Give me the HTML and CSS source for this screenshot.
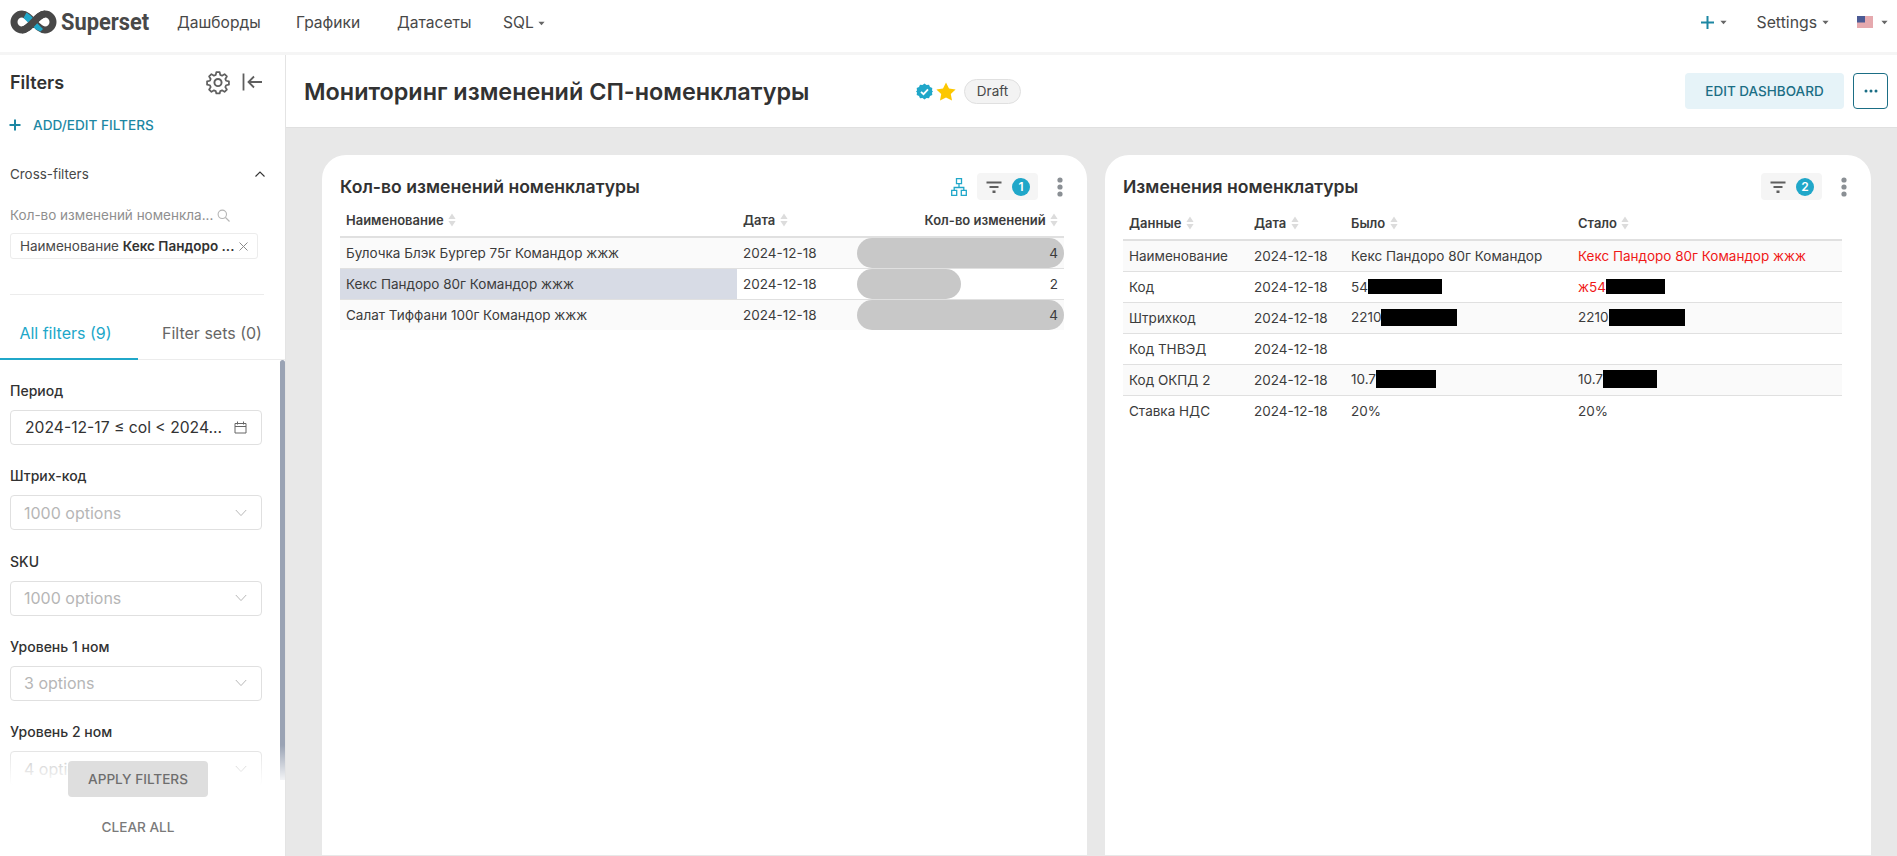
FILE: index.html
```html
<!DOCTYPE html>
<html lang="ru">
<head>
<meta charset="utf-8">
<title>Superset</title>
<link rel="stylesheet" href="styles.css">
</head>
<body>
<svg class="defs" width="0" height="0" aria-hidden="true">
  <defs>
    <symbol id="sort" viewBox="0 0 8 14"><path d="M4 0.5 7.6 6H0.4Z M4 13.5 0.4 8H7.6Z" fill="#dcdcdc"/></symbol>
    <symbol id="funnel" viewBox="0 0 16 14"><path d="M0.5 1.5H15.5V3.6H0.5Z M3.5 6H12.5V8H3.5Z M6.5 10.5H9.5V13H6.5Z" fill="#5f5f5f"/></symbol>
    <symbol id="kebab" viewBox="0 0 6 20"><circle cx="3" cy="3" r="2.6" fill="#8a8f94"/><circle cx="3" cy="10" r="2.6" fill="#8a8f94"/><circle cx="3" cy="17" r="2.6" fill="#8a8f94"/></symbol>
    <symbol id="chev" viewBox="0 0 12 8"><path d="M0.8 1 6 6.6 11.2 1" fill="none" stroke="#b8b8b8" stroke-width="1"/></symbol>
    <symbol id="caret" viewBox="0 0 8 5"><path d="M0.5 0.5H7.5L4 4.5Z" fill="#666"/></symbol>
  </defs>
</svg>

<nav class="nav">
  <div class="brand">
    <svg class="logo" viewBox="0 0 47 24" width="47" height="24" aria-hidden="true">
      <path d="M12 4c-4.400 0-8 3.600-8 8s3.600 8 8 8c4 0 7-3.200 11.500-8 4.500-4.800 7.500-8 11.500-8 4.400 0 8 3.600 8 8s-3.600 8-8 8c-4 0-7-3.200-11.500-8-4.500-4.800-7.500-8-11.500-8Z" fill="none" stroke="#484848" stroke-width="7"/>
      <path d="M16.500 2.500 20 5 26 11 21 15.500 13.500 8Z M26 12 33 19 30.500 21.500 26 19.500 21 14.500Z" fill="#20a7c9"/>
      <path d="M12 20c4 0 7-3.200 11.500-8 4.500-4.800 7.500-8 11.500-8" fill="none" stroke="#484848" stroke-width="7"/>
    </svg>
    <span class="brand-name">Superset</span>
  </div>
  <a class="nav-link nav-dash">Дашборды</a>
  <a class="nav-link nav-chart">Графики</a>
  <a class="nav-link nav-data">Датасеты</a>
  <a class="nav-link nav-sql">SQL <svg class="caret" width="7" height="5"><use href="#caret"/></svg></a>
  <div class="nav-right">
    <span class="nav-item nav-plus">
      <svg width="15" height="15" viewBox="0 0 15 15" aria-hidden="true"><path d="M7.500 1V14M1 7.500H14" stroke="#1d87a3" stroke-width="2"/></svg>
      <svg class="caret" width="7" height="5"><use href="#caret"/></svg>
    </span>
    <span class="nav-item nav-settings">Settings <svg class="caret" width="7" height="5"><use href="#caret"/></svg></span>
    <span class="nav-item nav-flag">
      <svg width="16" height="12" viewBox="0 0 16 12" aria-hidden="true">
        <rect width="16" height="12" fill="#f2f2f2"/>
        <path d="M0 1H16M0 3H16M0 5H16M0 7H16M0 9H16M0 11H16" stroke="#d9606b" stroke-width="1"/>
        <rect width="8" height="6.500" fill="#4b5a94"/>
      </svg>
      <svg class="caret" width="7" height="5"><use href="#caret"/></svg>
    </span>
  </div>
</nav>

<div class="page">
  <aside class="side">
    <div class="side-head">
      <h2 class="side-title">Filters</h2>
      <div class="side-tools">
        <svg class="gear" width="26" height="26" viewBox="0 0 24 24" aria-hidden="true">
          <path d="M10.300 2.500h3.400l.6 2.900 1.900.8 2.500-1.600 2.400 2.400-1.600 2.500.8 1.900 2.900.6v3.400l-2.900.6-.8 1.900 1.600 2.500-2.400 2.400-2.500-1.600-1.900.8-.6 2.400h-3.400l-.6-2.400-1.900-.8-2.500 1.600-2.400-2.400 1.600-2.500-.8-1.900-2.900-.6v-3.400l2.900-.6.8-1.900-1.600-2.500 2.400-2.400 2.500 1.600 1.900-.8Z" transform="translate(1.200 .6) scale(.9)" fill="none" stroke="#5f5f5f" stroke-width="1.800" stroke-linejoin="round"/>
          <circle cx="12" cy="12.500" r="3.300" fill="none" stroke="#5f5f5f" stroke-width="1.800"/>
        </svg>
        <svg class="collapse" width="21" height="18" viewBox="0 0 21 18" aria-hidden="true">
          <path d="M1.500 0.500V17.500" stroke="#5f5f5f" stroke-width="1.800"/>
          <path d="M20 9H6.500M12 3.500 6.500 9 12 14.500" fill="none" stroke="#5f5f5f" stroke-width="1.800"/>
        </svg>
      </div>
    </div>
    <div class="add-filters">
      <svg width="12" height="12" viewBox="0 0 12 12" aria-hidden="true"><path d="M6 .5V11.500M.5 6H11.500" stroke="#1d87a3" stroke-width="2"/></svg>
      <span>ADD/EDIT FILTERS</span>
    </div>
    <div class="cross-head">
      <span>Cross-filters</span>
      <svg width="10" height="6" viewBox="0 0 10 6" aria-hidden="true"><path d="M.5 5.500 5 1l4.500 4.500" fill="none" stroke="#333" stroke-width="1.100"/></svg>
    </div>
    <div class="cross-label">
      <span>Кол-во изменений номенкла...</span>
      <svg width="13" height="13" viewBox="0 0 13 13" aria-hidden="true"><circle cx="5.300" cy="5.300" r="4.200" fill="none" stroke="#b5b5b5" stroke-width="1.100"/><path d="M8.500 8.500 12.500 12.500" stroke="#b5b5b5" stroke-width="1.100"/></svg>
    </div>
    <div class="cross-tag">
      <span>Наименование <b>Кекс Пандоро ...</b></span>
      <svg width="9" height="9" viewBox="0 0 9 9" aria-hidden="true"><path d="M.5 .5 8.500 8.500M8.500 .5 .5 8.500" stroke="#8a8a8a" stroke-width="1"/></svg>
    </div>
    <div class="side-rule"></div>
    <div class="tabs">
      <span class="tab tab-on">All filters (9)</span>
      <span class="tab">Filter sets (0)</span>
    </div>
    <div class="filters">
      <div class="scrollbar"></div>
      <div class="field">
        <label class="field-label">Период</label>
        <div class="input input-date">
          <span>2024-12-17 ≤ col &lt; 2024...</span>
          <svg width="13" height="13" viewBox="0 0 13 13" aria-hidden="true"><path d="M1 2.500H12V12H1ZM1 5.500H12M3.500 .5V3.500M9.500 .5V3.500" fill="none" stroke="#666" stroke-width="1"/></svg>
        </div>
      </div>
      <div class="field">
        <label class="field-label">Штрих-код</label>
        <div class="input"><span>1000 options</span><svg width="12" height="8"><use href="#chev"/></svg></div>
      </div>
      <div class="field">
        <label class="field-label">SKU</label>
        <div class="input"><span>1000 options</span><svg width="12" height="8"><use href="#chev"/></svg></div>
      </div>
      <div class="field">
        <label class="field-label">Уровень 1 ном</label>
        <div class="input"><span>3 options</span><svg width="12" height="8"><use href="#chev"/></svg></div>
      </div>
      <div class="field">
        <label class="field-label">Уровень 2 ном</label>
        <div class="input"><span>4 options</span><svg width="12" height="8"><use href="#chev"/></svg></div>
      </div>
      <div class="fade"></div>
    </div>
    <button class="apply">APPLY FILTERS</button>
    <button class="clear">CLEAR ALL</button>
  </aside>

  <main class="main">
    <header class="dash-head">
      <h1 class="dash-title">Мониторинг изменений СП-номенклатуры</h1>
      <svg class="verified" width="17" height="17" viewBox="0 0 17 17" aria-hidden="true">
        <path d="M8.500 .5l2 1.500 2.500-.3 1 2.300 2.300 1-.3 2.500 1 1-1 1 .3 2.500-2.300 1-1 2.300-2.500-.3-2 1.500-2-1.500-2.500.3-1-2.300-2.300-1 .3-2.500-1-1 1-1-.3-2.500 2.300-1 1-2.300 2.500.3Z" fill="#20a7c9"/>
        <path d="M5 8.800 7.500 11.200 12 6.300" fill="none" stroke="#fff" stroke-width="1.800"/>
      </svg>
      <svg class="star" width="20" height="19" viewBox="0 0 20 19" aria-hidden="true"><path d="M10 .5 13 6.600l6.600.9-4.800 4.600 1.200 6.500L10 15.500l-6 3.100 1.200-6.500L.4 7.500 7 6.600Z" fill="#fcc700"/></svg>
      <span class="draft">Draft</span>
      <div class="dash-actions">
        <button class="edit">EDIT DASHBOARD</button>
        <button class="more">
          <svg width="14" height="4" viewBox="0 0 14 4" aria-hidden="true"><circle cx="2" cy="2" r="1.500" fill="#1b6e85"/><circle cx="7" cy="2" r="1.500" fill="#1b6e85"/><circle cx="12" cy="2" r="1.500" fill="#1b6e85"/></svg>
        </button>
      </div>
    </header>

    <div class="grid">
      <section class="card card-left">
        <div class="card-head">
          <h3 class="card-title">Кол-во изменений номенклатуры</h3>
          <svg class="tree" width="16" height="18" viewBox="0 0 16 18" aria-hidden="true">
            <path d="M5.500 .7h5v5h-5ZM.7 12.300h5v5h-5ZM10.300 12.300h5v5h-5ZM8 5.700V9.500M3.200 12.300V9.500H12.800V12.300" fill="none" stroke="#20a7c9" stroke-width="1.300"/>
          </svg>
          <div class="badge-box"><svg width="16" height="14"><use href="#funnel"/></svg><span class="badge">1</span></div>
          <svg class="kebab" width="6" height="20"><use href="#kebab"/></svg>
        </div>
        <table class="tbl tbl-left">
          <thead>
            <tr>
              <th class="c-name">Наименование <svg class="sort" width="8" height="14"><use href="#sort"/></svg></th>
              <th class="c-date">Дата <svg class="sort" width="8" height="14"><use href="#sort"/></svg></th>
              <th class="c-num">Кол-во изменений <svg class="sort" width="8" height="14"><use href="#sort"/></svg></th>
            </tr>
          </thead>
          <tbody>
            <tr class="odd">
              <td>Булочка Блэк Бургер 75г Командор жжж</td><td>2024-12-18</td>
              <td class="num"><div class="bar bar-full"></div><span class="num-val">4</span></td>
            </tr>
            <tr>
              <td class="picked">Кекс Пандоро 80г Командор жжж</td><td>2024-12-18</td>
              <td class="num"><div class="bar bar-half"></div><span class="num-val">2</span></td>
            </tr>
            <tr class="odd">
              <td>Салат Тиффани 100г Командор жжж</td><td>2024-12-18</td>
              <td class="num"><div class="bar bar-full"></div><span class="num-val">4</span></td>
            </tr>
          </tbody>
        </table>
      </section>

      <section class="card card-right">
        <div class="card-head">
          <h3 class="card-title">Изменения номенклатуры</h3>
          <div class="badge-box badge-box-r"><svg width="16" height="14"><use href="#funnel"/></svg><span class="badge">2</span></div>
          <svg class="kebab" width="6" height="20"><use href="#kebab"/></svg>
        </div>
        <table class="tbl tbl-right">
          <thead>
            <tr>
              <th class="r1">Данные <svg class="sort" width="8" height="14"><use href="#sort"/></svg></th>
              <th class="r2">Дата <svg class="sort" width="8" height="14"><use href="#sort"/></svg></th>
              <th class="r3">Было <svg class="sort" width="8" height="14"><use href="#sort"/></svg></th>
              <th>Стало <svg class="sort" width="8" height="14"><use href="#sort"/></svg></th>
            </tr>
          </thead>
          <tbody>
            <tr class="odd"><td>Наименование</td><td>2024-12-18</td><td>Кекс Пандоро 80г Командор</td><td class="red">Кекс Пандоро 80г Командор жжж</td></tr>
            <tr><td>Код</td><td>2024-12-18</td><td>54<span class="mask m1"></span></td><td class="red">ж54<span class="mask m2"></span></td></tr>
            <tr class="odd"><td>Штрихкод</td><td>2024-12-18</td><td>2210<span class="mask m3"></span></td><td>2210<span class="mask m3 m3b"></span></td></tr>
            <tr><td>Код ТНВЭД</td><td>2024-12-18</td><td></td><td></td></tr>
            <tr class="odd"><td>Код ОКПД 2</td><td>2024-12-18</td><td>10.7<span class="mask m4"></span></td><td>10.7<span class="mask m5"></span></td></tr>
            <tr><td>Ставка НДС</td><td>2024-12-18</td><td>20%</td><td>20%</td></tr>
          </tbody>
        </table>
      </section>
    </div>
  </main>
</div>
</body>
</html>
```

FILE: styles.css
```css
* { box-sizing: border-box; }
html, body { margin: 0; height: 100%; overflow: hidden; }
body { font-family: Inter, "Noto Sans", sans-serif; color: #323232; background: #fff; font-size: 14px; }
.defs { position: absolute; }
h1, h2, h3 { margin: 0; }

/* top nav */
.nav { height: 55px; display: flex; align-items: center; padding: 0 0 8px 10px; border-bottom: 3px solid #f5f5f5; background: #fff; }
.brand { display: flex; align-items: center; gap: 4px; width: 167px; }
.brand-name { font-family: Roboto, Inter, sans-serif; font-size: 23.5px; font-weight: 700; color: #484848; transform: scaleX(.93); transform-origin: left center; }
.nav-link { font-size: 15.6px; color: #484848; }
.nav-dash { width: 119px; }
.nav-chart { width: 101px; }
.nav-data { width: 106px; }
.nav-right { margin-left: auto; display: flex; align-items: center; }
.nav-item { display: inline-flex; align-items: center; gap: 5px; font-size: 15.8px; color: #484848; }
.nav-plus { margin-right: 30px; }
.nav-settings { margin-right: 28px; }
.nav-flag { margin-right: 9px; gap: 8px; }
.caret { vertical-align: 2px; }

/* page */
.page { display: flex; height: 801px; }
.side { position: relative; flex: 0 0 286px; border-right: 1px solid #e4e4e4; background: #fff; overflow: hidden; }
.side-head { display: flex; align-items: center; justify-content: space-between; height: 54px; padding: 0 22px 0 10px; }
.side-title { font-size: 18px; font-weight: 600; color: #323232; }
.side-tools { display: flex; align-items: center; gap: 11px; }
.add-filters { display: flex; align-items: center; gap: 12px; padding-left: 9px; height: 32px; color: #1d87a3; font-size: 13.6px; font-weight: 500; }
.cross-head { display: flex; align-items: center; justify-content: space-between; padding: 0 20px 0 10px; margin-top: 17px; height: 32px; font-size: 13.4px; color: #484848; }
.cross-label { display: flex; align-items: center; gap: 4px; padding-left: 10px; margin-top: 13px; height: 24px; font-size: 13.5px; color: #8f8f8f; }
.cross-tag { display: flex; align-items: center; justify-content: space-between; margin: 6px 0 0 10px; width: 248px; height: 26px; padding: 0 9px; border: 1px solid #ececec; border-radius: 3px; font-size: 13.5px; color: #484848; white-space: nowrap; }
.cross-tag b { font-weight: 600; color: #323232; }
.side-rule { margin: 35px 21px 0 10px; border-top: 1px solid #ececec; }
.tabs { display: flex; height: 65px; border-bottom: 1px solid #ececec; }
.tab { flex: 0 0 138px; display: flex; align-items: center; justify-content: center; padding-top: 12px; font-size: 16px; color: #666; }
.tab-on { color: #20a7c9; border-bottom: 2px solid #20a7c9; margin-bottom: -1px; padding-right: 7px; }
.tab:not(.tab-on) { padding-left: 10px; }
.filters { position: relative; height: 440px; padding-top: 19px; overflow: hidden; }
.scrollbar { position: absolute; top: 0; right: 0; width: 5px; height: 420px; border-radius: 3px 3px 0 0; background: #9aa3b4; }
.field { height: 85.3px; padding: 0 23px 0 10px; }
.field-label { display: block; font-size: 14px; font-weight: 500; line-height: 24px; color: #323232; }
.input { display: flex; align-items: center; justify-content: space-between; height: 35px; margin-top: 7px; padding: 0 14px 0 13px; border: 1px solid #e0e0e0; border-radius: 4px; font-size: 16px; color: #b6b6b6; white-space: nowrap; }
.input-date { padding: 0 14px; font-size: 15.7px; color: #323232; }
.fade { position: absolute; left: 0; right: 0; top: 385px; height: 40px; background: linear-gradient(to bottom, rgba(255,255,255,0), #fff); }
.fade::after { content: ""; position: absolute; left: 0; right: 0; top: 40px; height: 60px; background: #fff; }
.apply, .clear { position: absolute; left: 68px; width: 140px; border: 0; font-family: inherit; font-size: 13.6px; font-weight: 500; text-align: center; }
.apply { top: 706px; height: 36px; border-radius: 4px; background: #dedede; color: #6e6e6e; }
.clear { top: 762px; height: 20px; padding: 0; background: none; color: #7a7a7a; }

/* main */
.main { flex: 1; min-width: 0; display: flex; flex-direction: column; background: #e8e8e8; }
.dash-head { display: flex; align-items: center; height: 73px; flex: none; padding: 0 9px 0 18px; background: #fff; border-bottom: 1px solid #e0e0e0; }
.dash-title { width: 612px; font-size: 23.4px; font-weight: 600; color: #323232; white-space: nowrap; }
.verified { margin-right: 3px; }
.star { margin-right: 8px; }
.draft { display: inline-flex; align-items: center; justify-content: center; width: 57px; height: 25px; border: 1px solid #e0e0e0; border-radius: 13px; background: #f3f3f3; font-size: 13.5px; color: #484848; }
.dash-actions { margin-left: auto; display: flex; gap: 9px; }
.edit { width: 159px; height: 36px; border: 0; padding: 0; border-radius: 4px; background: #e6f3f8; color: #1b6e85; font-family: inherit; font-size: 13.5px; font-weight: 500; }
.more { display: flex; align-items: center; justify-content: center; width: 35px; height: 36px; padding: 0; border: 1px solid #1b6e85; border-radius: 4px; background: #fff; }

.grid { flex: 1; display: grid; grid-template-columns: 765px 766px; column-gap: 18px; padding: 27px 26px 0 36px; overflow: hidden; }
.card { border-radius: 24px 24px 0 0; background: #fff; padding: 18px 0 0 18px; height: 700px; }
.card-head { display: flex; align-items: center; height: 27px; padding-right: 24px; }
.card-title { margin-right: auto; font-size: 17.6px; font-weight: 600; color: #323232; }
.tree { margin-right: 10px; }
.badge-box { display: flex; align-items: center; gap: 10px; width: 61px; height: 27px; padding-left: 9px; border-radius: 4px; background: #f5f5f5; }
.badge { display: inline-flex; align-items: center; justify-content: center; width: 18px; height: 18px; border-radius: 50%; background: #20a7c9; color: #fff; font-size: 12px; font-weight: 600; }
.kebab { margin-left: 19px; }

.tbl { border-collapse: collapse; table-layout: fixed; font-size: 13.5px; color: #3c3c3c; }
.tbl th { text-align: left; font-weight: 600; font-size: 13px; color: #3c3c3c; white-space: nowrap; padding: 0 6px; border-bottom: 2px solid #e0e0e0; }
.tbl td { height: 31px; padding: 0 6px; border-bottom: 1px solid #e0e0e0; white-space: nowrap; }
.tbl tbody tr:last-child td { border-bottom: 0; }
.tbl .odd td { background: #fafafa; }
.sort { vertical-align: -2px; margin-left: 1px; }
.tbl-left { width: 724px; margin-top: 4px; }
.tbl-left th { height: 33px; }
.c-name { width: 397px; }
.c-date { width: 120px; }
.c-num { text-align: right !important; }
.tbl-right { width: 719px; margin-top: 6px; margin-left: 0; }
.tbl-right th { height: 34px; }
.r1 { width: 125px; }
.r2 { width: 97px; }
.r3 { width: 227px; }
.tbl td.picked { background: #d7dbe5; }
.num { position: relative; padding: 0 !important; text-align: right; }
.bar { position: absolute; left: 0; top: 0; bottom: 0; border-radius: 15px; background: #c8c8c8; }
.bar-full { width: 100%; }
.bar-half { width: 50%; }
.num-val { position: relative; padding-right: 6px; }
.red { color: #f01818; }
.mask { display: inline-block; vertical-align: middle; background: #000; margin-top: -2px; }
.m1 { width: 74px; height: 15px; }
.m2 { width: 59px; height: 15px; }
.m3 { width: 76px; height: 17px; }
.m3b { margin-left: 1px; }
.m4 { width: 60px; height: 18px; }
.m5 { width: 54px; height: 18px; }
```
